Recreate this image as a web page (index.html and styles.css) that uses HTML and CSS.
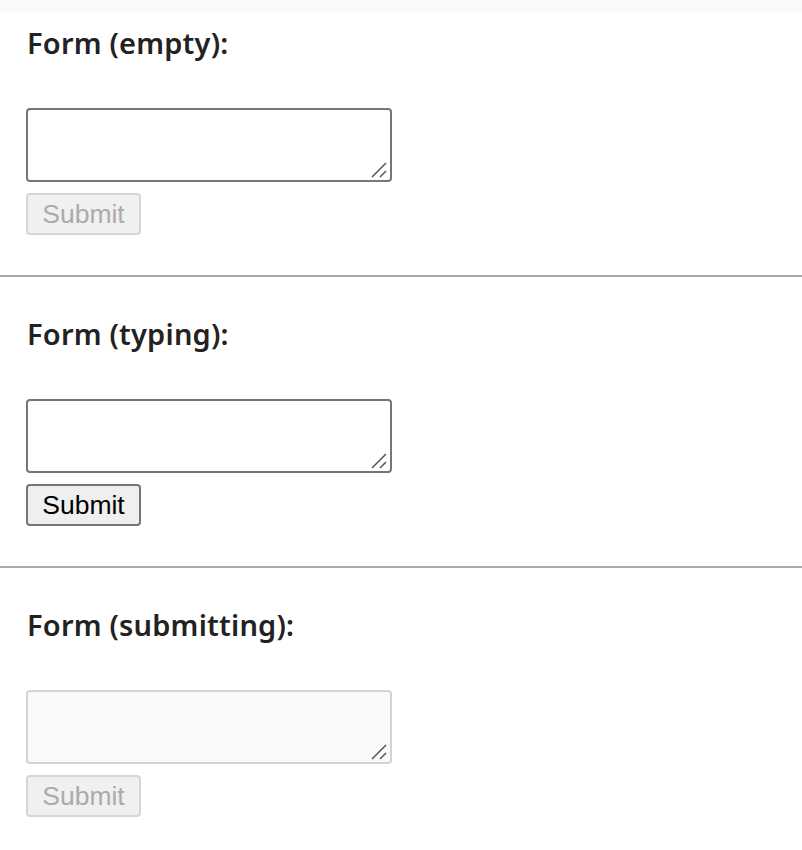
FILE: index.html
```html
<!DOCTYPE html>
<html lang="en">

<head>
    <meta charset="UTF-8">
    <meta name="viewport" content="width=device-width, initial-scale=1.0">
    <title>Form states</title>
    <link rel="stylesheet" href="styles.css">
</head>

<body>
    <div class="band"></div>

    <!--空表单-->
    <div class="block first">
        <h2>Form (empty):</h2>
        <form class="form">
            <div class="field">
                <textarea></textarea>
                <svg class="grip" width="18" height="18" viewBox="0 0 18 18"><path d="M1 16 L15 2 M9 16 L15 10" /></svg>
            </div>
            <button type="submit" disabled>Submit</button>
        </form>
    </div>
    <hr>

    <!--输入中-->
    <div class="block">
        <h2>Form (typing):</h2>
        <form class="form">
            <div class="field">
                <textarea></textarea>
                <svg class="grip" width="18" height="18" viewBox="0 0 18 18"><path d="M1 16 L15 2 M9 16 L15 10" /></svg>
            </div>
            <button type="submit">Submit</button>
        </form>
    </div>
    <hr>

    <!--提交中-->
    <div class="block">
        <h2>Form (submitting):</h2>
        <form class="form">
            <div class="field">
                <textarea disabled></textarea>
                <svg class="grip" width="18" height="18" viewBox="0 0 18 18"><path d="M1 16 L15 2 M9 16 L15 10" /></svg>
            </div>
            <button type="submit" disabled>Submit</button>
        </form>
    </div>
</body>

</html>
```

FILE: styles.css
```css
* {
    margin: 0;
    padding: 0;
    box-sizing: border-box
}

body {
    background-color: #fff;
    font-family: "Noto Sans", sans-serif;
    color: #222;
}

.band {
    height: 12px;
    background-color: #fafafa;
}

.block {
    padding: 41px 26px 40px;
}

.block.first {
    padding-top: 15px;
}

.block h2 {
    font-size: 29px;
    font-weight: 600;
    line-height: 32px;
    letter-spacing: 0.2px;
    margin-bottom: 49px;
    padding-left: 1px;
}

hr {
    border: 0;
    height: 2px;
    background-color: #a9a9a9;
}

.field {
    position: relative;
    width: 366px;
}

.form textarea {
    display: block;
    width: 366px;
    height: 74px;
    border: 2px solid #767676;
    border-radius: 4px;
    background-color: #fff;
    font-size: 26px;
    resize: none;
}

.form textarea:disabled {
    border-color: #d3d3d3;
    background-color: #f9f9f9;
}

/* 右下角拖拽手柄 */
.grip {
    position: absolute;
    right: 3px;
    bottom: 3px;
    fill: none;
    stroke: #555;
    stroke-width: 1.5;
}

.form button {
    display: block;
    margin-top: 11px;
    width: 115px;
    height: 42px;
    border: 2px solid #767676;
    border-radius: 4px;
    background-color: #efefef;
    color: #000;
    font-family: "Liberation Sans", Arial, sans-serif;
    font-size: 26.5px;
    line-height: 36px;
    text-align: center;
}

.form button:disabled {
    border-color: #d6d6d6;
    background-color: #f0f0f0;
    color: #ababab;
}
```
